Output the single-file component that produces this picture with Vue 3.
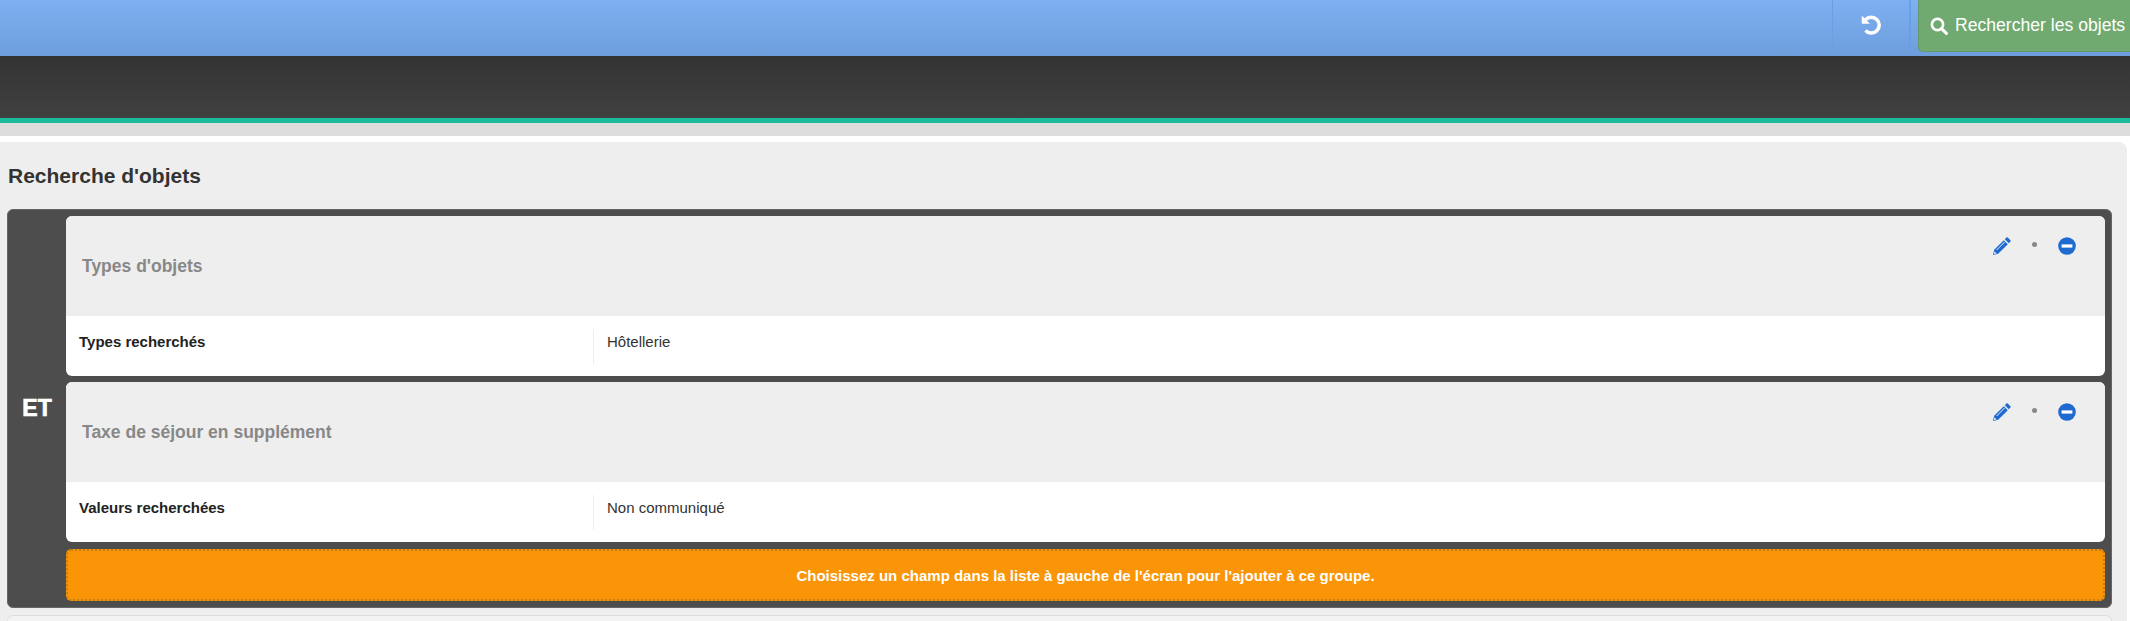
<template>
  <div class="page">
    <header class="topbar">
      <div class="reset-cell">
        <svg class="reset-icon" viewBox="0 0 20 20">
          <path d="M5 5.2A7.2 7.2 0 1 1 5 15" fill="none" stroke="#fff" stroke-width="3.2" />
          <path d="M1.6 1.4 L9 8.8 L1.6 8.8 Z" fill="#fff" />
        </svg>
      </div>
      <button class="search-btn">
        <svg class="search-icon" viewBox="0 0 18 18">
          <circle cx="7.5" cy="7.5" r="5.6" fill="none" stroke="#fff" stroke-width="2.6" />
          <path d="M11.6 11.6L16.4 16.4" stroke="#fff" stroke-width="3" stroke-linecap="round" />
        </svg>
        Rechercher les objets
      </button>
    </header>
    <div class="darkbar"></div>
    <div class="graybar"></div>

    <main class="panel">
      <h1 class="panel-title">Recherche d'objets</h1>
      <section class="group">
        <div class="group-op">ET</div>
        <div class="group-body">
          <article v-for="card in cards" :key="card.title" class="card">
            <div class="card-head">
              <h2 class="card-title">{{ card.title }}</h2>
              <div class="actions">
                <svg class="pencil" viewBox="0 0 18 18">
                  <path d="M13.4 0.6a1 1 0 0 1 1.4 0l2.6 2.6a1 1 0 0 1 0 1.4l-1.6 1.6-4-4zM10.8 3.2l4 4-9.6 9.6L0 18l1.2-5.2z" fill="#1f6ad0" />
                  <path d="M11.6 5L3.6 13" stroke="#fff" stroke-width="0.9" />
                  <path d="M1.4 14.2l2.4 2.4-2.9 0.6z" fill="#cfe0f6" />
                </svg>
                <span class="dot"></span>
                <svg class="minus" viewBox="0 0 18 18">
                  <circle cx="9" cy="9" r="8.8" fill="#1f6ad0" />
                  <rect x="3.6" y="7.4" width="10.8" height="3.2" fill="#fff" />
                </svg>
              </div>
            </div>
            <div class="card-row">
              <div class="row-label">{{ card.label }}</div>
              <div class="row-value">{{ card.value }}</div>
            </div>
          </article>
          <div class="dropzone">Choisissez un champ dans la liste à gauche de l'écran pour l'ajouter à ce groupe.</div>
        </div>
      </section>
      <div class="next-box"></div>
    </main>
  </div>
</template>

<script setup>
const cards = [
  { title: "Types d'objets", label: "Types recherchés", value: "Hôtellerie" },
  { title: "Taxe de séjour en supplément", label: "Valeurs recherchées", value: "Non communiqué" },
];
</script>

<style>
html, body {
  margin: 0;
  background: #fff;
  overflow: hidden;
}
</style>

<style scoped>
.page {
  height: 621px;
  overflow: hidden;
  font-family: "Liberation Sans", Arial, sans-serif;
  color: #333;
}

.topbar {
  height: 56px;
  display: flex;
  justify-content: flex-end;
  align-items: flex-start;
  background: linear-gradient(#7eb0f2, #6d9ddb);
}

.reset-cell {
  width: 76px;
  height: 56px;
  display: flex;
  align-items: center;
  justify-content: center;
  border-left: 1px solid #6c9ee6;
  border-right: 2px solid #6c9ee6;
  margin-right: 7px;
}

.reset-icon {
  width: 22px;
  height: 22px;
  margin-top: -6px;
}

.search-btn {
  width: 212px;
  height: 52px;
  padding: 0 0 0 11px;
  display: flex;
  align-items: center;
  gap: 7px;
  background: #70aa70;
  border: 1px solid #62996a;
  border-top: 0;
  border-right: 0;
  border-radius: 0 0 0 5px;
  color: #fff;
  font: 17.6px "Liberation Sans", Arial, sans-serif;
  white-space: nowrap;
}

.search-icon {
  width: 18px;
  height: 18px;
  flex: none;
}

.darkbar {
  height: 62px;
  background: linear-gradient(#333, #414141);
  border-bottom: 5px solid #1abc9c;
}

.graybar {
  height: 13px;
  background: #ddd;
  margin-bottom: 6px;
}

.panel {
  margin-right: 3px;
  padding: 1px 15px 8px 7px;
  background: #eee;
  border-radius: 0 8px 0 0;
}

.panel-title {
  margin: 0;
  padding: 21px 0 21px 1px;
  font-size: 21px;
  line-height: 24px;
  font-weight: bold;
  color: #333;
}

.group {
  height: 399px;
  box-sizing: border-box;
  display: flex;
  background: #4d4d4d;
  border: 1px solid #666;
  border-radius: 6px;
  padding: 6px 6px 6px 0;
}

.group-op {
  width: 58px;
  flex: none;
  display: flex;
  align-items: center;
  justify-content: center;
  color: #fff;
  font-size: 23px;
  font-weight: bold;
  -webkit-text-stroke: 0.7px #fff;
}

.group-body {
  flex: 1;
  display: flex;
  flex-direction: column;
  gap: 6px;
}

.card {
  height: 160px;
  background: #fff;
  border-radius: 6px;
  overflow: hidden;
}

.card-head {
  height: 100px;
  display: flex;
  justify-content: space-between;
  align-items: center;
  padding: 0 29px 0 16px;
  background: #eee;
}

.card-title {
  margin: 0;
  font-size: 17.5px;
  font-weight: bold;
  color: #888;
}

.actions {
  align-self: flex-start;
  display: flex;
  align-items: center;
  padding-top: 21px;
}

.pencil {
  width: 18px;
  height: 18px;
}

.dot {
  width: 5px;
  height: 5px;
  margin: -4px 21px 0;
  border-radius: 50%;
  background: #888;
}

.minus {
  width: 18px;
  height: 18px;
}

.card-row {
  height: 60px;
  padding-top: 13px;
  box-sizing: border-box;
  display: flex;
  font-size: 15px;
  line-height: 25px;
}

.row-label {
  width: 514px;
  height: 35px;
  padding-left: 13px;
  font-weight: bold;
  color: #222;
}

.row-value {
  height: 35px;
  padding-left: 13px;
  border-left: 1px solid #eee;
  color: #333;
}

.dropzone {
  height: 52px;
  margin-top: 1px;
  box-sizing: border-box;
  display: flex;
  align-items: center;
  justify-content: center;
  background: #fa9507;
  border: 2px dotted #c47d10;
  border-radius: 5px;
  color: #fff;
  font-size: 15px;
  font-weight: bold;
}

.next-box {
  height: 40px;
  margin-top: 7px;
  background: #f3f3f3;
  border: 1px solid #ddd;
  border-radius: 6px;
}
</style>
